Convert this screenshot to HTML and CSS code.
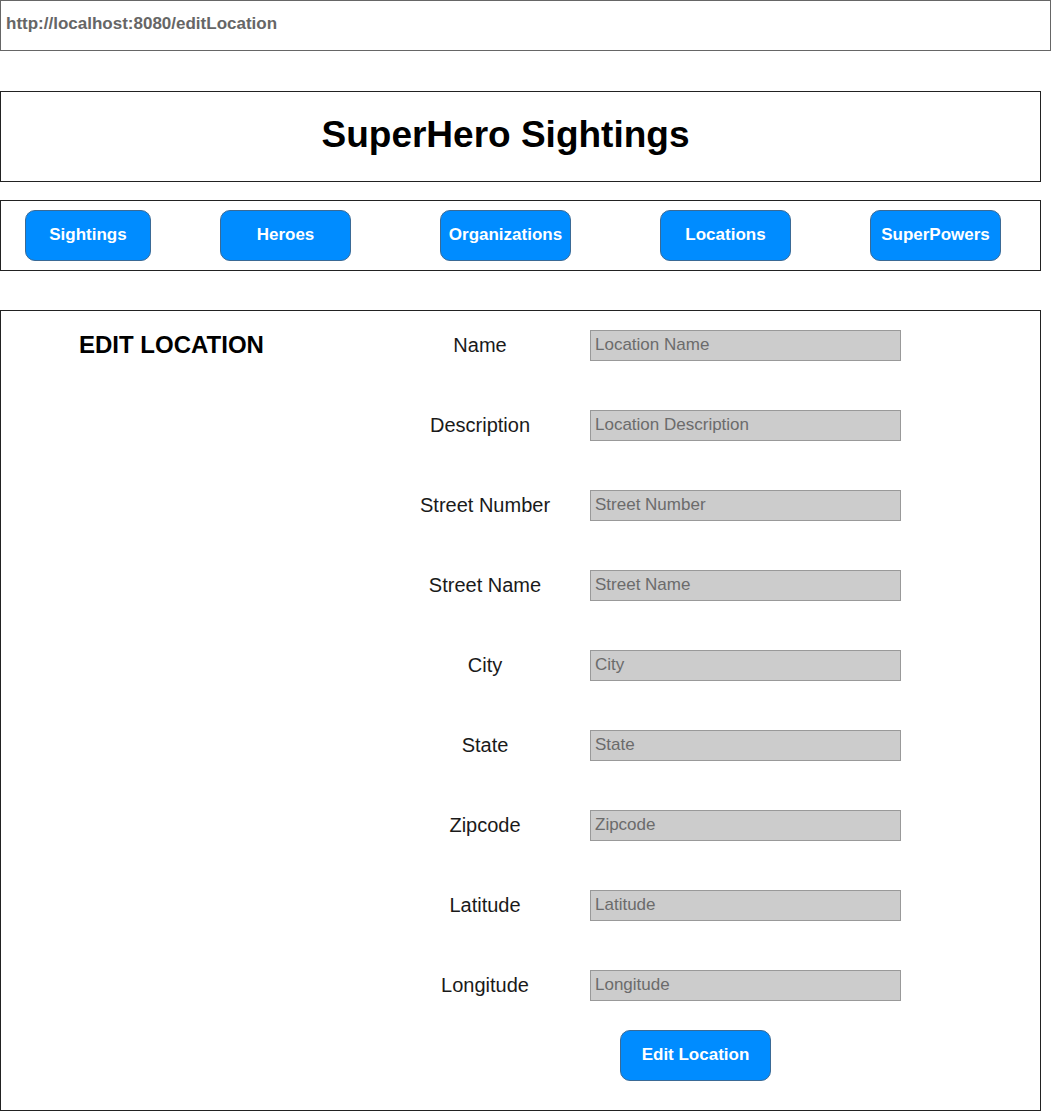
FILE: index.html
```html
<!DOCTYPE html>
<html lang="en">
<head>
<meta charset="utf-8">
<title>Edit Location</title>
<link rel="stylesheet" href="styles.css">
</head>
<body>
<div class="urlbar">http://localhost:8080/editLocation</div>

<header class="box header">
  <h1 class="title">SuperHero Sightings</h1>
</header>

<nav class="box nav">
  <a class="btn nav-btn b1">Sightings</a>
  <a class="btn nav-btn b2">Heroes</a>
  <a class="btn nav-btn b3">Organizations</a>
  <a class="btn nav-btn b4">Locations</a>
  <a class="btn nav-btn b5">SuperPowers</a>
</nav>

<main class="box main">
  <h2 class="page-title">EDIT LOCATION</h2>
  <form class="form">
    <div class="row"><label class="label narrow">Name</label><input class="field" placeholder="Location Name"></div>
    <div class="row"><label class="label narrow">Description</label><input class="field" placeholder="Location Description"></div>
    <div class="row"><label class="label">Street Number</label><input class="field" placeholder="Street Number"></div>
    <div class="row"><label class="label">Street Name</label><input class="field" placeholder="Street Name"></div>
    <div class="row"><label class="label">City</label><input class="field" placeholder="City"></div>
    <div class="row"><label class="label">State</label><input class="field" placeholder="State"></div>
    <div class="row"><label class="label">Zipcode</label><input class="field" placeholder="Zipcode"></div>
    <div class="row"><label class="label">Latitude</label><input class="field" placeholder="Latitude"></div>
    <div class="row"><label class="label">Longitude</label><input class="field" placeholder="Longitude"></div>
    <div class="actions"><button type="button" class="btn submit">Edit Location</button></div>
  </form>
</main>
</body>
</html>
```

FILE: styles.css
```css
* { box-sizing: border-box; }

html, body {
  margin: 0;
  padding: 0;
  background: #fff;
  font-family: "Liberation Sans", Arial, sans-serif;
  color: #000;
}

.urlbar {
  width: 1051px;
  height: 51px;
  border: 1px solid #666;
  padding: 0 0 0 5px;
  font-size: 17px;
  font-weight: bold;
  color: #666;
  line-height: 45px;
  white-space: nowrap;
}

.box {
  width: 1041px;
  border: 1px solid #222;
}

.header {
  margin-top: 40px;
  height: 91px;
  display: flex;
  align-items: center;
  justify-content: center;
}

.title {
  margin: 0 30px 4px 0;
  font-size: 37px;
  font-weight: bold;
  line-height: 40px;
}

.nav {
  margin-top: 18px;
  height: 71px;
  display: flex;
  align-items: center;
  padding-left: 24px;
}

.btn {
  display: flex;
  align-items: center;
  justify-content: center;
  height: 51px;
  background: #008cff;
  border: 1px solid #3a6a96;
  border-radius: 10px;
  color: #fff;
  font-family: "Liberation Sans", Arial, sans-serif;
  font-weight: bold;
  font-size: 17px;
  padding: 0 0 2px 0;
  white-space: nowrap;
}

.nav-btn { width: 131px; }
.b1 { width: 126px; }
.b2 { margin-left: 69px; }
.b3 { margin-left: 89px; }
.b4 { margin-left: 89px; }
.b5 { margin-left: 79px; }

.main {
  margin-top: 39px;
  height: 801px;
  display: flex;
  align-items: flex-start;
  padding: 19px 0 0 78px;
}

.page-title {
  margin: 0;
  width: 341px;
  font-size: 24px;
  font-weight: bold;
  line-height: 30px;
  white-space: nowrap;
}

.form {
  display: flex;
  flex-direction: column;
  gap: 49px;
}

.row {
  display: flex;
  align-items: center;
  height: 31px;
}

.label {
  width: 130px;
  text-align: center;
  font-size: 20px;
  color: #1a1a1a;
  margin-right: 40px;
  white-space: nowrap;
}

.label.narrow {
  width: 120px;
  margin-right: 50px;
}

.field {
  width: 311px;
  height: 31px;
  margin: 0;
  background: #ccc;
  border: 1px solid #999;
  padding: 0 0 2px 4px;
  font-family: "Liberation Sans", Arial, sans-serif;
  font-size: 17px;
  color: #666;
  outline: none;
}

.field::placeholder { color: #6b6b6b; opacity: 1; }

.actions {
  margin-top: -20px;
  padding-left: 200px;
}

.submit {
  width: 151px;
}
```
